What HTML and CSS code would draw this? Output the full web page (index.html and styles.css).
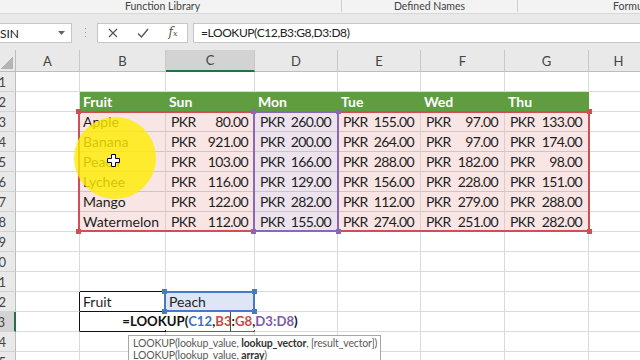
FILE: index.html
```html
<!DOCTYPE html>
<html>
<head>
<meta charset="utf-8">
<link rel="stylesheet" href="styles.css">
</head>
<body>
<div class="ribbon">
  <div class="group g1">Function Library</div>
  <div class="group g2">Defined Names</div>
  <div class="group g3">Formula Auditing</div>
</div>
<div class="fbar">
  <div class="namebox"><span>SIN</span><svg width="7" height="4" viewBox="0 0 7 4"><polygon points="0,0 7,0 3.5,4" fill="#666"/></svg></div>
  <svg class="dots" width="3" height="14" viewBox="0 0 3 14"><rect x="1" y="2" width="1" height="1" fill="#9a9a9a"/><rect x="1" y="6" width="1" height="1" fill="#9a9a9a"/><rect x="1" y="10" width="1" height="1" fill="#9a9a9a"/></svg>
  <div class="fxbtns">
    <svg width="10" height="10" viewBox="0 0 10 10"><path d="M1 1 L9 9 M9 1 L1 9" stroke="#555" stroke-width="1.2" fill="none"/></svg>
    <svg width="12" height="10" viewBox="0 0 12 10"><path d="M1 5.5 L4.5 9 L11 1" stroke="#555" stroke-width="1.3" fill="none"/></svg>
    <span class="fx">f<small>x</small></span>
  </div>
  <div class="finput">=LOOKUP(C12,B3:G8,D3:D8)</div>
</div>
<div class="sheet">
  <div class="corner"></div><div class="ch">A</div><div class="ch">B</div><div class="ch sel">C</div><div class="ch">D</div><div class="ch">E</div><div class="ch">F</div><div class="ch">G</div><div class="ch">H</div>

  <div class="rh">1</div><div class="c"></div><div class="c"></div><div class="c"></div><div class="c"></div><div class="c"></div><div class="c"></div><div class="c"></div><div class="c"></div>

  <div class="rh">2</div><div class="c"></div><div class="c th">Fruit</div><div class="c th">Sun</div><div class="c th">Mon</div><div class="c th">Tue</div><div class="c th">Wed</div><div class="c th">Thu</div><div class="c"></div>

  <div class="rh">3</div><div class="c"></div><div class="c d">Apple</div><div class="c d acc"><span>PKR</span><span>80.00</span></div><div class="c d pur acc"><span>PKR</span><span>260.00</span></div><div class="c d acc"><span>PKR</span><span>155.00</span></div><div class="c d acc"><span>PKR</span><span>97.00</span></div><div class="c d acc"><span>PKR</span><span>133.00</span></div><div class="c"></div>

  <div class="rh">4</div><div class="c"></div><div class="c d">Banana</div><div class="c d acc"><span>PKR</span><span>921.00</span></div><div class="c d pur acc"><span>PKR</span><span>200.00</span></div><div class="c d acc"><span>PKR</span><span>264.00</span></div><div class="c d acc"><span>PKR</span><span>97.00</span></div><div class="c d acc"><span>PKR</span><span>174.00</span></div><div class="c"></div>

  <div class="rh">5</div><div class="c"></div><div class="c d">Peach</div><div class="c d acc"><span>PKR</span><span>103.00</span></div><div class="c d pur acc"><span>PKR</span><span>166.00</span></div><div class="c d acc"><span>PKR</span><span>288.00</span></div><div class="c d acc"><span>PKR</span><span>182.00</span></div><div class="c d acc"><span>PKR</span><span>98.00</span></div><div class="c"></div>

  <div class="rh">6</div><div class="c"></div><div class="c d">Lychee</div><div class="c d acc"><span>PKR</span><span>116.00</span></div><div class="c d pur acc"><span>PKR</span><span>129.00</span></div><div class="c d acc"><span>PKR</span><span>156.00</span></div><div class="c d acc"><span>PKR</span><span>228.00</span></div><div class="c d acc"><span>PKR</span><span>151.00</span></div><div class="c"></div>

  <div class="rh">7</div><div class="c"></div><div class="c d">Mango</div><div class="c d acc"><span>PKR</span><span>122.00</span></div><div class="c d pur acc"><span>PKR</span><span>282.00</span></div><div class="c d acc"><span>PKR</span><span>112.00</span></div><div class="c d acc"><span>PKR</span><span>279.00</span></div><div class="c d acc"><span>PKR</span><span>288.00</span></div><div class="c"></div>

  <div class="rh">8</div><div class="c"></div><div class="c d">Watermelon</div><div class="c d acc"><span>PKR</span><span>112.00</span></div><div class="c d pur acc"><span>PKR</span><span>155.00</span></div><div class="c d acc"><span>PKR</span><span>274.00</span></div><div class="c d acc"><span>PKR</span><span>251.00</span></div><div class="c d acc"><span>PKR</span><span>282.00</span></div><div class="c"></div>

  <div class="rh">9</div><div class="c"></div><div class="c"></div><div class="c"></div><div class="c"></div><div class="c"></div><div class="c"></div><div class="c"></div><div class="c"></div>

  <div class="rh">10</div><div class="c"></div><div class="c"></div><div class="c"></div><div class="c"></div><div class="c"></div><div class="c"></div><div class="c"></div><div class="c"></div>

  <div class="rh">11</div><div class="c"></div><div class="c bb"></div><div class="c"></div><div class="c"></div><div class="c"></div><div class="c"></div><div class="c"></div><div class="c"></div>

  <div class="rh">12</div><div class="c br"></div><div class="c box">Fruit</div><div class="c peach">Peach</div><div class="c"></div><div class="c"></div><div class="c"></div><div class="c"></div><div class="c"></div>

  <div class="rh sel">13</div><div class="c br"></div><div class="c box"></div><div class="c active"><span class="formula">=LOOKUP(<b class="blue">C12</b>,<b class="red">B3</b>:<b class="red">G8</b>,<b class="purple">D3:D8</b>)</span></div><div class="c"></div><div class="c"></div><div class="c"></div><div class="c"></div><div class="c"></div>

  <div class="rh">14</div><div class="c"></div><div class="c"></div><div class="c"></div><div class="c"></div><div class="c"></div><div class="c"></div><div class="c"></div><div class="c"></div>

  <div class="rh">15</div><div class="c"></div><div class="c"></div><div class="c"></div><div class="c"></div><div class="c"></div><div class="c"></div><div class="c"></div><div class="c"></div>

  <div class="ref ref-red"><i class="h tl"></i><i class="h tr"></i><i class="h bl"></i><i class="h br2"></i></div>
  <div class="ref ref-pur"><i class="h tl"></i><i class="h tr"></i><i class="h bl"></i><i class="h br2"></i></div>
  <div class="ref ref-blue"><i class="h tl"></i><i class="h tr"></i><i class="h bl"></i><i class="h br2"></i></div>
  <div class="caret"></div>

  <div class="spot"></div>
  <svg class="cursor" width="13" height="13" viewBox="0 0 13 13"><path d="M4.5 0.5 H8.5 V4.5 H12.5 V8.5 H8.5 V12.5 H4.5 V8.5 H0.5 V4.5 H4.5 Z" fill="#fff" stroke="#000" stroke-width="1"/></svg>

  <div class="tip">
    <div>LOOKUP(lookup_value, <b>lookup_vector</b>, [result_vector])</div>
    <div>LOOKUP(lookup_value, <b>array</b>)</div>
  </div>
</div>
</body>
</html>
```

FILE: styles.css
```css
* { box-sizing: border-box; }
html, body {
  margin: 0;
  width: 640px;
  height: 360px;
  overflow: hidden;
  background: #fff;
  font-family: Lato, "Noto Sans", sans-serif;
}

.ribbon {
  height: 14px;
  background: #f3f3f3;
  border-bottom: 1px solid #d8d8d8;
  display: flex;
  align-items: flex-start;
  font-size: 10.5px;
  color: #444;
  white-space: nowrap;
}
.group {
  height: 12px;
  line-height: 12px;
  text-align: center;
  border-right: 1px solid #cfcfcf;
  flex-shrink: 0;
}
.g1 { width: 342px; padding-right: 16px; }
.g2 { width: 176px; }
.g3 { flex: 1 1 0; min-width: 0; text-align: left; padding-left: 95px; border-right: none; overflow: hidden; }

.fbar {
  height: 36px;
  background: #e9e9e9;
  display: flex;
  align-items: flex-start;
  padding-top: 9px;
}
.namebox {
  width: 72px;
  height: 20px;
  background: #fff;
  border: 1px solid #c6c6c6;
  border-left: none;
  display: flex;
  align-items: center;
  justify-content: space-between;
  padding: 0 6px 0 0;
  font-size: 12px;
  color: #222;
}
.dots { margin: 3px 0 0 12px; }
.fxbtns {
  margin-left: 10px;
  width: 91px;
  height: 20px;
  background: #fff;
  border: 1px solid #c6c6c6;
  display: grid;
  grid-template-columns: 30px 30px 30px;
  align-items: center;
  justify-items: center;
}
.fx {
  font-family: "DejaVu Serif", "Liberation Serif", serif;
  font-style: italic;
  font-size: 12px;
  color: #555;
  line-height: 14px;
}
.fx small { font-size: 8px; }
.finput {
  margin-left: 5px;
  flex: 1;
  height: 20px;
  background: #fff;
  border: 1px solid #c6c6c6;
  border-right: none;
  padding-left: 7px;
  font-size: 12px;
  letter-spacing: -0.4px;
  line-height: 18px;
  color: #222;
  white-space: nowrap;
}

.sheet {
  position: relative;
  display: grid;
  grid-template-columns: 16px 64px 86px 89px 83px 83px 84px 84px 60px;
  grid-template-rows: 22px repeat(15, 20px);
}
.corner {
  position: relative;
  background: #e9e9e9;
  border-right: 1px solid #bdbdbd;
  border-bottom: 1px solid #bdbdbd;
}
.corner::after {
  content: "";
  position: absolute;
  right: 2px;
  bottom: 2px;
  width: 12px;
  height: 12px;
  background: linear-gradient(to bottom right, transparent 50%, #b5b5b5 50%);
}
.ch {
  background: #e9e9e9;
  border-right: 1px solid #c8c8c8;
  border-bottom: 1px solid #bdbdbd;
  display: flex;
  align-items: center;
  justify-content: center;
  font-size: 13px;
  color: #444;
}
.ch.sel {
  background: #d3d3d3;
  border-bottom: 2px solid #217346;
}
.rh {
  background: #e9e9e9;
  border-right: 1px solid #bdbdbd;
  border-bottom: 1px solid #d2d2d2;
  display: flex;
  align-items: center;
  justify-content: flex-end;
  padding-right: 9px;
  overflow: hidden;
  white-space: nowrap;
  font-size: 13px;
  color: #444;
}
.rh.sel {
  background: #d3d3d3;
  border-right: 2px solid #217346;
}
.c {
  border-right: 1px solid #dadada;
  border-bottom: 1px solid #dadada;
  display: flex;
  align-items: center;
  padding: 0 3px;
  white-space: nowrap;
  font-size: 14px;
  color: #1e1e1e;
}
.th {
  background: #5f9d40;
  border-right-color: #5f9d40;
  border-bottom-color: #5f9d40;
  color: #fff;
  font-weight: bold;
}
.d {
  background: #f8e5e4;
  border-right-color: #d9cfcf;
  border-bottom-color: #cdc6c6;
}
.d.pur { background: #ece3ee; }
.acc {
  justify-content: space-between;
  padding: 0 6px 0 5px;
  letter-spacing: -0.6px;
}
.bb { border-bottom-color: #111; }
.br { border-right-color: #111; }
.box { border-right-color: #111; border-bottom-color: #111; }
.peach { background: #dce6f5; }
.active {
  justify-content: center;
  overflow: visible;
  border-right-color: #3f7a52;
  border-bottom-color: #3f7a52;
  padding: 0;
}
.formula {
  background: #fff;
  font-weight: bold;
  font-size: 13.2px;
  line-height: 17px;
  color: #111;
  padding: 0 1px;
}
.formula b { font-weight: bold; }
.blue { color: #3e6fc3; }
.red { color: #c64b4b; }
.purple { color: #7c5ba8; }

.ref {
  position: absolute;
  border: 2px solid;
}
.ref-red { left: 78px; top: 61px; width: 512px; height: 121px; border-color: #cf4f55; }
.ref-pur { left: 253px; top: 61px; width: 86px; height: 121px; border-color: #8a68b3; }
.ref-blue { left: 164px; top: 241px; width: 91px; height: 21px; border-color: #4a78c8; }
.h {
  position: absolute;
  width: 5px;
  height: 5px;
}
.ref-red .h { background: #cf4f55; }
.ref-pur .h { background: #8a68b3; }
.ref-blue .h { background: #4a78c8; }
.tl { left: -4px; top: -4px; }
.tr { right: -4px; top: -4px; }
.bl { left: -4px; bottom: -4px; }
.br2 { right: -4px; bottom: -4px; }

.caret {
  position: absolute;
  left: 230px;
  top: 262px;
  width: 1px;
  height: 19px;
  background: #2f5f40;
}

.spot {
  position: absolute;
  left: 74px;
  top: 67px;
  width: 82px;
  height: 82px;
  border-radius: 50%;
  background: rgba(255, 236, 0, 0.8);
}
.cursor {
  position: absolute;
  left: 107px;
  top: 104px;
}

.tip {
  position: absolute;
  left: 128px;
  top: 285px;
  width: 253px;
  height: 30px;
  background: #fff;
  border: 1px solid #a6a6a6;
  padding: 1px 4px;
  font-size: 10.5px;
  letter-spacing: -0.15px;
  line-height: 12px;
  color: #5a5a5a;
  white-space: nowrap;
}
.tip b { color: #333; }
```
